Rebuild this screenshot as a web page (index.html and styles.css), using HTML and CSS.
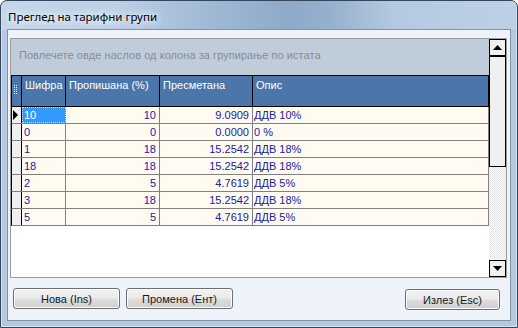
FILE: index.html
```html
<!DOCTYPE html>
<html>
<head>
<meta charset="utf-8">
<link rel="stylesheet" href="styles.css">
</head>
<body>
<div class="window">
  <div class="titlebar"><span class="title">Преглед на тарифни групи</span></div>
  <div class="client">
    <div class="grid">
      <div class="main">
        <div class="group-panel">Повлечете овде наслов од колона за групирање по истата</div>
        <div class="header">
          <div class="hcell c0"><svg class="grip" width="5" height="10" viewBox="0 0 5 10"><g fill="#ffffff"><rect x="0" y="0" width="1" height="1"/><rect x="2" y="0" width="1" height="1"/><rect x="0" y="2" width="1" height="1"/><rect x="2" y="2" width="1" height="1"/><rect x="0" y="4" width="1" height="1"/><rect x="2" y="4" width="1" height="1"/><rect x="0" y="6" width="1" height="1"/><rect x="2" y="6" width="1" height="1"/><rect x="0" y="8" width="1" height="1"/><rect x="2" y="8" width="1" height="1"/></g></svg></div>
          <div class="hcell c1">Шифра</div>
          <div class="hcell c2">Пропишана (%)</div>
          <div class="hcell c3">Пресметана</div>
          <div class="hcell c4">Опис</div>
        </div>
        <div class="row">
          <div class="cell ind c0"><svg width="6" height="10" viewBox="0 0 6 10"><path d="M0 0 L5 5 L0 10 Z" fill="#000"/></svg></div>
          <div class="cell c1 sel">10</div>
          <div class="cell c2 num">10</div>
          <div class="cell c3 num">9.0909</div>
          <div class="cell c4 txt">ДДВ 10%</div>
        </div>
        <div class="row">
          <div class="cell ind c0"></div>
          <div class="cell c1">0</div>
          <div class="cell c2 num">0</div>
          <div class="cell c3 num">0.0000</div>
          <div class="cell c4 txt">0 %</div>
        </div>
        <div class="row">
          <div class="cell ind c0"></div>
          <div class="cell c1">1</div>
          <div class="cell c2 num">18</div>
          <div class="cell c3 num">15.2542</div>
          <div class="cell c4 txt">ДДВ 18%</div>
        </div>
        <div class="row">
          <div class="cell ind c0"></div>
          <div class="cell c1">18</div>
          <div class="cell c2 num">18</div>
          <div class="cell c3 num">15.2542</div>
          <div class="cell c4 txt">ДДВ 18%</div>
        </div>
        <div class="row">
          <div class="cell ind c0"></div>
          <div class="cell c1">2</div>
          <div class="cell c2 num">5</div>
          <div class="cell c3 num">4.7619</div>
          <div class="cell c4 txt">ДДВ 5%</div>
        </div>
        <div class="row">
          <div class="cell ind c0"></div>
          <div class="cell c1">3</div>
          <div class="cell c2 num">18</div>
          <div class="cell c3 num">15.2542</div>
          <div class="cell c4 txt">ДДВ 18%</div>
        </div>
        <div class="row">
          <div class="cell ind c0"></div>
          <div class="cell c1">5</div>
          <div class="cell c2 num">5</div>
          <div class="cell c3 num">4.7619</div>
          <div class="cell c4 txt">ДДВ 5%</div>
        </div>
        <div class="empty"></div>
      </div>
      <div class="vscroll">
        <div class="sb-btn"><svg width="9" height="5" viewBox="0 0 9 5"><path d="M0 5 L4.5 0 L9 5 Z" fill="#000"/></svg></div>
        <div class="sb-thumb"></div>
        <div class="sb-track"></div>
        <div class="sb-btn"><svg width="9" height="5" viewBox="0 0 9 5"><path d="M0 0 L9 0 L4.5 5 Z" fill="#000"/></svg></div>
      </div>
    </div>
    <div class="buttons">
      <button class="btn wide">Нова (Ins)</button>
      <button class="btn wide">Промена (Ент)</button>
      <span class="spacer"></span>
      <button class="btn exit">Излез (Esc)</button>
    </div>
  </div>
</div>
</body>
</html>
```

FILE: styles.css
```css
* { box-sizing: border-box; }
html, body { margin: 0; padding: 0; }
body {
  width: 518px;
  height: 328px;
  overflow: hidden;
  background: #ffffff;
  font-family: "Liberation Sans", Arial, sans-serif;
  font-size: 11px;
}
.window {
  width: 518px;
  height: 328px;
  border: 1px solid #35455a;
  border-radius: 7px 7px 0 0;
  padding: 0 6px 6px 6px;
  display: flex;
  flex-direction: column;
  background:
    linear-gradient(90deg, #c4d6ea 0%, #bcd0e6 22%, #a0bad6 40%, #8daac8 56%, #96b1ce 64%, #b4c9e0 76%, #bdd0e5 100%) top left / 100% 29px no-repeat,
    #b4c9e1;
  box-shadow: inset 1px 0 0 #d3e1f0, inset -1px 0 0 #d3e1f0, inset 0 -1px 0 #d3e1f0;
}
.titlebar {
  height: 28px;
  flex: none;
  display: flex;
  align-items: center;
  padding-left: 1px;
  padding-top: 2px;
}
.title {
  font-family: "Noto Sans", "Liberation Sans", sans-serif;
  font-size: 11.5px;
  color: #000;
  text-shadow: 0 0 6px #ffffff, 0 0 10px #ffffff, 0 0 14px rgba(255,255,255,0.8);
}
.client {
  flex: 1;
  border: 1px solid #8193aa;
  background: #eef3fa;
  padding: 8px 3px 0 2px;
  display: flex;
  flex-direction: column;
}
.grid {
  height: 240px;
  flex: none;
  border: 1px solid #9c9c9c;
  display: flex;
  background: #ffffff;
}
.main {
  width: 478px;
  display: flex;
  flex-direction: column;
}
.group-panel {
  height: 36px;
  flex: none;
  background: #bfcddb;
  color: #878c93;
  padding: 10px 0 0 8px;
  line-height: 13px;
  white-space: nowrap;
  letter-spacing: 0.05px;
}
.header {
  display: flex;
  height: 32px;
  flex: none;
  border-top: 1px solid #000;
  border-bottom: 1px solid #000;
  border-left: 1px solid #000;
  background: #4a76aa;
  color: #ffffff;
}
.hcell {
  border-right: 1px solid #000;
  padding: 3px 0 0 3px;
  line-height: 13px;
  white-space: nowrap;
}
.hcell.c0 { padding: 9px 0 0 2px; }
.grip { display: block; }
.c0 { width: 10px; flex: none; }
.c1 { width: 44px; flex: none; }
.c2 { width: 94px; flex: none; }
.c3 { width: 93px; flex: none; }
.c4 { width: 236px; flex: none; }
.row {
  display: flex;
  height: 17px;
  flex: none;
  border-left: 1px solid #000;
  border-bottom: 1px solid #808080;
  background: #fffbf0;
  color: #2020a6;
}
.cell {
  border-right: 1px solid #808080;
  line-height: 16px;
  padding: 0 2px;
  white-space: nowrap;
  overflow: hidden;
}
.cell.ind {
  background: #f0f0f0;
  border-right: 1px solid #000;
  padding: 3px 0 0 1px;
}
.cell.ind svg { display: block; }
.cell.num { text-align: right; padding-right: 3px; }
.cell.txt { padding-left: 1px; }
.cell.sel {
  background: #3399ff;
  color: #ffffff;
  outline: 1px dotted #bcdcff;
  outline-offset: -1px;
}
.empty { flex: 1; background: #ffffff; }
.vscroll {
  width: 17px;
  flex: none;
  display: flex;
  flex-direction: column;
}
.sb-btn {
  height: 17px;
  flex: none;
  border: 1px solid #000;
  background: #f0f0f0;
  display: flex;
  align-items: center;
  justify-content: center;
}
.sb-thumb {
  height: 111px;
  flex: none;
  border: 1px solid #000;
  background: #f0f0f0;
}
.sb-track {
  flex: 1;
  background: repeating-conic-gradient(#ffffff 0 25%, #e4e4e4 0 50%) 0 0 / 2px 2px;
}
.buttons {
  display: flex;
  margin-top: 10px;
  padding: 0 7px 0 3px;
  gap: 6px;
}
.spacer { flex: 1; }
.btn {
  height: 21px;
  border: 1px solid #707070;
  border-radius: 3px;
  background: linear-gradient(#f2f2f2 0%, #ebebeb 48%, #dddddd 52%, #cfcfcf 100%);
  box-shadow: inset 0 0 0 1px #fbfbfb;
  font-family: "Liberation Sans", Arial, sans-serif;
  font-size: 11px;
  font-weight: normal;
  color: #1a1a1a;
  padding: 0;
}
.btn.wide { width: 107px; }
.btn.exit { width: 95px; margin-top: 1px; }
```
